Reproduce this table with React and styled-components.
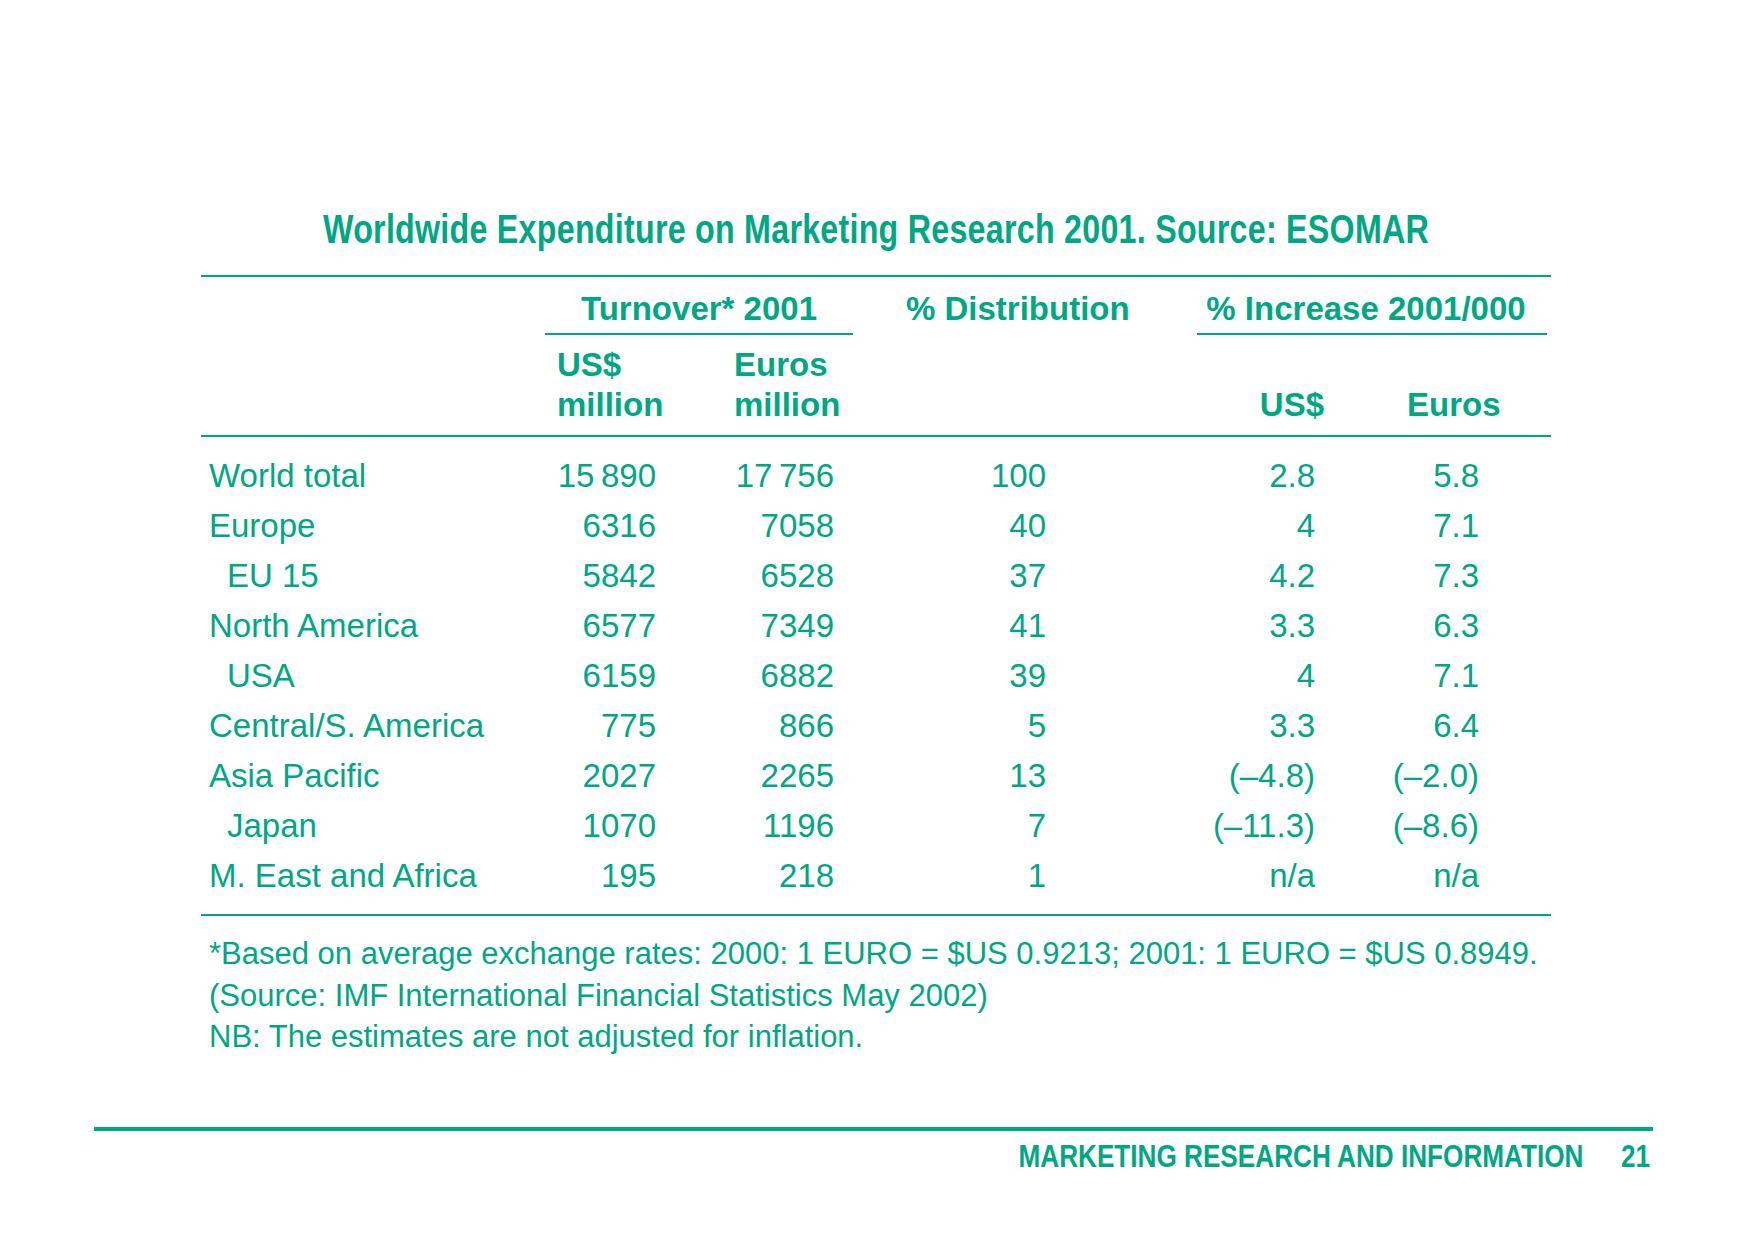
import React from 'react'
import styled, { createGlobalStyle } from 'styled-components'

const GREEN = '#00a783'

const GlobalStyle = createGlobalStyle`
    html, body {
        margin: 0;
        padding: 0;
        background: #fff;
    }
    body {
        font-family: "Liberation Sans", Arial, sans-serif;
        color: ${GREEN};
    }
`

const Page = styled.div`
    width: 1750px;
    height: 1242px;
    padding-top: 205px;
    box-sizing: border-box;
    display: flex;
    flex-direction: column;
`

const TableBlock = styled.section`
    margin-left: 201px;
    width: 1350px;
    display: flex;
    flex-direction: column;
`

// no narrow face installed, so squeeze the bold face horizontally
const Narrow = styled.span`
    display: inline-block;
    white-space: nowrap;
    transform: scaleX(${p => p.$scale || 0.817});
    transform-origin: ${p => p.$origin || 'center'};
`

const Title = styled.h1`
    margin: 0 0 22px;
    display: flex;
    justify-content: center;
    font-weight: 700;
    font-size: 40px;
    line-height: 48px;
    letter-spacing: 0.3px;
`

const Grid = styled.div`
    display: grid;
    grid-template-columns: 344px 145px 163px 344px 173px 181px;
`

const Head = styled(Grid)`
    border-top: 2px solid ${GREEN};
    border-bottom: 2px solid ${GREEN};
    font-weight: 700;
    font-size: 33px;
    line-height: 40px;
`

const GroupCell = styled.div`
    grid-column: span ${p => p.$span || 1};
    padding-top: 12px;
    padding-bottom: ${p => (p.$rule ? 4 : 6)}px;
    margin-right: ${p => p.$trim || 0}px;
    text-align: ${p => p.$align || 'center'};
    padding-left: ${p => p.$left || 0}px;
    padding-right: ${p => p.$right || 0}px;
    border-bottom: ${p => (p.$rule ? `2px solid ${GREEN}` : 'none')};
    white-space: nowrap;
`

const SubCell = styled.div`
    padding-top: ${p => (p.$low ? 50 : 10)}px;
    padding-bottom: 10px;
    padding-left: ${p => p.$left || 0}px;
    padding-right: ${p => p.$right || 0}px;
    text-align: ${p => p.$align || 'left'};
`

const Body = styled.div`
    padding: 14px 0 13px;
    border-bottom: 2px solid ${GREEN};
    font-size: 33px;
    line-height: 50px;
`

const Label = styled.div`
    padding-left: ${p => (p.$sub ? 26 : 8)}px;
    white-space: nowrap;
`

const Num = styled.div`
    text-align: right;
    padding-right: ${p => p.$pad}px;
    white-space: nowrap;
`

const Notes = styled.div`
    margin-top: 17px;
    padding-left: 8px;
    font-size: 31px;
    line-height: 41.5px;
    white-space: nowrap;
`

const Footer = styled.footer`
    margin-top: 69px;
    margin-left: 94px;
    width: 1559px;
    border-top: 4px solid ${GREEN};
    display: flex;
    justify-content: flex-end;
    padding: 7px 3px 0 0;
    box-sizing: border-box;
    font-weight: 700;
    font-size: 32px;
    line-height: 36px;
`

const PageNo = styled.span`
    margin-left: 46px;
`

const pads = [34, 19, 151, 55, 72]

const rows = [
    ['World total', false, '15\u2009890', '17\u2009756', '100', '2.8', '5.8'],
    ['Europe', false, '6316', '7058', '40', '4', '7.1'],
    ['EU 15', true, '5842', '6528', '37', '4.2', '7.3'],
    ['North America', false, '6577', '7349', '41', '3.3', '6.3'],
    ['USA', true, '6159', '6882', '39', '4', '7.1'],
    ['Central/S. America', false, '775', '866', '5', '3.3', '6.4'],
    ['Asia Pacific', false, '2027', '2265', '13', '(\u20134.8)', '(\u20132.0)'],
    ['Japan', true, '1070', '1196', '7', '(\u201311.3)', '(\u20138.6)'],
    ['M. East and Africa', false, '195', '218', '1', 'n/a', 'n/a'],
]

export default function App() {
    return (
        <>
            <GlobalStyle />
            <Page>
                <TableBlock>
                    <Title>
                        <Narrow $scale={0.806}>Worldwide Expenditure on Marketing Research 2001. Source: ESOMAR</Narrow>
                    </Title>

                    <Head>
                        <GroupCell />
                        <GroupCell $span={2} $rule>Turnover* 2001</GroupCell>
                        <GroupCell $align="left" $left={53}>% Distribution</GroupCell>
                        <GroupCell $span={2} $rule $trim={4} $right={12}>% Increase 2001/000</GroupCell>

                        <SubCell />
                        <SubCell $left={12}>US$<br />million</SubCell>
                        <SubCell $left={44}>Euros<br />million</SubCell>
                        <SubCell />
                        <SubCell $low $align="right" $right={46}>US$</SubCell>
                        <SubCell $low $left={37}>Euros</SubCell>
                    </Head>

                    <Body>
                        {rows.map(([name, sub, ...nums]) => (
                            <Grid key={name}>
                                <Label $sub={sub}>{name}</Label>
                                {nums.map((n, i) => (
                                    <Num key={i} $pad={pads[i]}>{n}</Num>
                                ))}
                            </Grid>
                        ))}
                    </Body>

                    <Notes>
                        <div>*Based on average exchange rates: 2000: 1 EURO = $US 0.9213; 2001: 1 EURO = $US 0.8949.</div>
                        <div>(Source: IMF International Financial Statistics May 2002)</div>
                        <div>NB: The estimates are not adjusted for inflation.</div>
                    </Notes>
                </TableBlock>

                <Footer>
                    <Narrow $scale={0.817} $origin="right">
                        MARKETING RESEARCH AND INFORMATION
                        <PageNo>21</PageNo>
                    </Narrow>
                </Footer>
            </Page>
        </>
    )
}
